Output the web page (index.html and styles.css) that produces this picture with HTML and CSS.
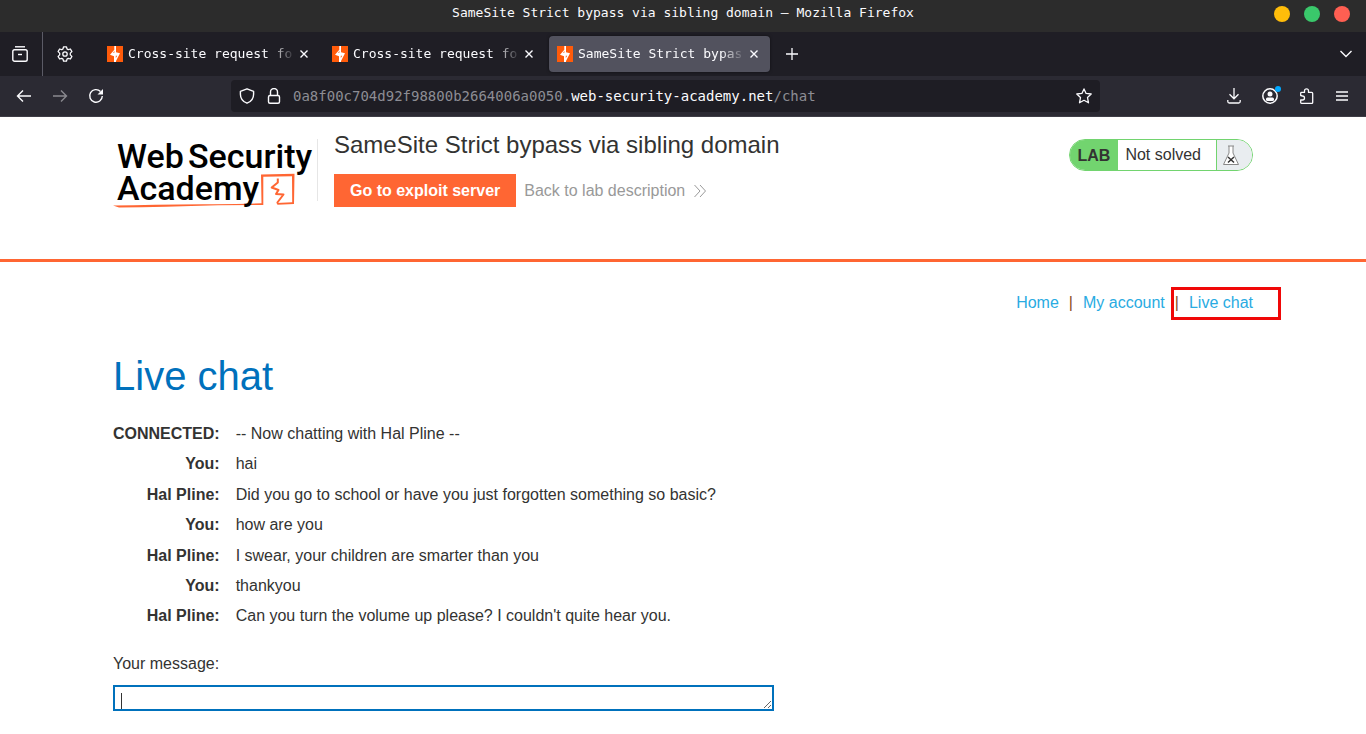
FILE: index.html
```html
<!DOCTYPE html>
<html lang="en">
<head>
<meta charset="utf-8">
<title>SameSite Strict bypass via sibling domain</title>
<link rel="stylesheet" href="styles.css">
</head>
<body>
<svg class="defs" aria-hidden="true">
  <symbol id="bolt" viewBox="0 0 16 16">
    <path fill="#ff5b0a" d="M0 0h16v16H0z"/>
    <path fill="#fff" d="M7.300 0H9v6.200l4 1L9 15v1H7v-5.800L3 8.800l4.300-5z"/>
    <path fill="#ff5b0a" d="M7.400 5v1.800H6zM8.800 9.800h1.400L8.800 12z"/>
  </symbol>
  <symbol id="close" viewBox="0 0 8 8"><path d="M.5.5l7 7M7.500.5l-7 7" fill="none" stroke="currentColor" stroke-width="1.400"/></symbol>
</svg>

<header class="browser">
  <div class="titlebar">
    <span class="window-title">SameSite Strict bypass via sibling domain — Mozilla Firefox</span>
    <div class="window-controls">
      <button class="dot dot-min" aria-label="Minimize"></button>
      <button class="dot dot-max" aria-label="Maximize"></button>
      <button class="dot dot-close" aria-label="Close window"></button>
    </div>
  </div>

  <div class="tabstrip">
    <button class="tool view-button" aria-label="Firefox View">
      <svg width="16" height="16" viewBox="0 0 16 16" fill="none" stroke="currentColor" stroke-width="1.400"><path d="M3 .8h10"/><rect x=".8" y="3.800" width="14.400" height="11.400" rx="1.800"/><path d="M6 8.500h4"/></svg>
    </button>
    <button class="tool gear-button" aria-label="Settings">
      <svg width="16" height="16" viewBox="0 0 16 16" fill="none" stroke="currentColor" stroke-width="1.300" stroke-linejoin="round"><path d="M6.500.8h3l.5 2.100 1.300.8 2.100-.7 1.500 2.600-1.600 1.500v1.800l1.600 1.500-1.500 2.600-2.100-.7-1.300.8-.5 2.100h-3L6 13.100l-1.300-.8-2.100.7-1.500-2.600 1.600-1.500V7.100L1.100 5.600 2.600 3l2.100.7L6 2.900z"/><circle cx="8" cy="8" r="2.200"/></svg>
    </button>
    <div class="tab">
      <svg class="favicon"><use href="#bolt"/></svg><span class="tab-label">Cross-site request fo</span>
      <button class="tab-close" aria-label="Close tab"><svg width="8" height="8"><use href="#close"/></svg></button>
    </div>
    <div class="tab">
      <svg class="favicon"><use href="#bolt"/></svg><span class="tab-label">Cross-site request fo</span>
      <button class="tab-close" aria-label="Close tab"><svg width="8" height="8"><use href="#close"/></svg></button>
    </div>
    <div class="tab tab-active">
      <svg class="favicon"><use href="#bolt"/></svg><span class="tab-label">SameSite Strict bypas</span>
      <button class="tab-close" aria-label="Close tab"><svg width="8" height="8"><use href="#close"/></svg></button>
    </div>
    <button class="tool new-tab" aria-label="New tab">
      <svg width="12" height="12" viewBox="0 0 12 12" stroke="currentColor" stroke-width="1.300"><path d="M6 0v12M0 6h12"/></svg>
    </button>
    <button class="tool all-tabs" aria-label="List all tabs">
      <svg width="12" height="8" viewBox="0 0 12 8" fill="none" stroke="currentColor" stroke-width="1.400"><path d="M.5 1L6 6.500 11.500 1"/></svg>
    </button>
  </div>

  <div class="toolbar">
    <nav class="history">
      <button class="tool" aria-label="Back"><svg width="16" height="14" viewBox="0 0 16 14" fill="none" stroke="currentColor" stroke-width="1.400"><path d="M15 7H1.500M7 1.500L1.500 7 7 12.500"/></svg></button>
      <button class="tool tool-disabled" aria-label="Forward"><svg width="16" height="14" viewBox="0 0 16 14" fill="none" stroke="currentColor" stroke-width="1.400"><path d="M1 7h13.500M9 1.500L14.500 7 9 12.500"/></svg></button>
      <button class="tool" aria-label="Reload"><svg width="16" height="16" viewBox="0 0 16 16" fill="none" stroke="currentColor" stroke-width="1.400"><path d="M12.500 3.500A6.300 6.300 0 1 0 14.300 8"/><path fill="currentColor" stroke="none" d="M15 1v5.500H9.500z"/></svg></button>
    </nav>
    <div class="urlbar">
      <svg width="16" height="16" viewBox="0 0 16 16" fill="none" stroke="currentColor" stroke-width="1.400" stroke-linejoin="round"><path d="M8 .8l6.600 2.600v2.800c0 3.800-2.800 7.500-6.600 9-3.800-1.500-6.600-5.200-6.600-9V3.400z"/></svg>
      <svg width="16" height="16" viewBox="0 0 16 16" fill="none" stroke="currentColor" stroke-width="1.400"><rect x="2.500" y="7.500" width="11" height="7.800" rx="1.500"/><path d="M4.500 7.500V4a3.500 3.500 0 0 1 7 0v3.500"/></svg>
      <span class="url">0a8f00c704d92f98800b2664006a0050.<span class="url-host">web-security-academy.net</span>/chat</span>
      <button class="tool" aria-label="Bookmark this page"><svg width="16" height="16" viewBox="0 0 16 16" fill="none" stroke="currentColor" stroke-width="1.300" stroke-linejoin="round"><path d="M8 .9l2.100 4.500 5.100.6-3.700 3.500 1 5.300L8 12.300l-4.500 2.500 1-5.300L.8 6l5.100-.6z"/></svg></button>
    </div>
    <div class="actions">
      <button class="tool" aria-label="Downloads"><svg width="14" height="16" viewBox="0 0 14 16" fill="none" stroke="currentColor" stroke-width="1.300"><path d="M7 0v10.500M2.500 6.300L7 10.800l4.500-4.500M.8 12v1.500q0 1.500 1.500 1.500h9.400q1.500 0 1.500-1.500V12"/></svg></button>
      <button class="tool account" aria-label="Account"><svg width="16" height="16" viewBox="0 0 16 16" fill="currentColor"><circle cx="8" cy="8" r="7.200" fill="none" stroke="currentColor" stroke-width="1.500"/><circle cx="8" cy="6" r="2.500"/><rect x="4" y="9.500" width="8" height="3.500" rx="1.500"/></svg><span class="account-badge"></span></button>
      <button class="tool" aria-label="Extensions"><svg width="16" height="16" viewBox="0 0 16 16" fill="none" stroke="currentColor" stroke-width="1.300" stroke-linejoin="round"><path d="M1.700 7.500V5.200q0-.8.800-.8h3V2.800a2 2 0 0 1 4 0v1.600h3.200q1 0 1 1v9q0 .9-.9.900H2.500q-.8 0-.8-.8v-2.500h1.800a2 2 0 0 0 0-4z"/></svg></button>
      <button class="tool" aria-label="Menu"><svg width="12" height="10" viewBox="0 0 12 10" stroke="currentColor" stroke-width="1.300"><path d="M0 1h12M0 5h12M0 9h12"/></svg></button>
    </div>
  </div>
</header>

<section class="lab-header">
  <div class="container lab-row">
    <a class="logo" href="#">
      <svg width="200" height="72" viewBox="0 0 200 72" role="img" aria-label="Web Security Academy">
        <g class="logo-text"><text x="4" y="29">Web</text><text x="75" y="29">Security</text></g>
        <path fill="#ff6633" d="M0 66.500Q40 65.800 90 65.200t58.500-1L148 35.500 181.500 34.800 181 65 164.500 65.800 163.500 64 179.200 63.200 179 37.200 150.300 37.800 150.300 66l-45 .3Q50 68 6 68.500z"/>
        <path fill="none" stroke="#ff6633" stroke-width="2" stroke-linejoin="round" d="M164.800 39.500v4L158.700 48.500l6.800 2.500-2.500 4 7.500.5-6.500 8.500"/>
        <g class="logo-text"><text x="4" y="61">Academy</text></g>
      </svg>
    </a>
    <div class="lab-info">
      <h2>SameSite Strict bypass via sibling domain</h2>
      <div class="lab-links">
        <a class="button" href="#">Go to exploit server</a>
        <a class="back-link" href="#">Back to lab description
          <svg width="12" height="12" viewBox="0 0 12 12" fill="none" stroke="currentColor"><path d="M.5 0l5.500 6-5.500 6M6 0l5.500 6L6 12"/></svg></a>
      </div>
    </div>
    <div class="status">
      <span class="status-tag">LAB</span>
      <span class="status-text">Not solved</span>
      <span class="status-icon"><svg width="18" height="21" viewBox="0 0 18 21"><path fill="#fff" stroke="#888" d="M6 1h6M7 1v7L1.500 19.500h15L11 8V1"/><path fill="none" stroke="#333" stroke-width="1.500" d="M6 12l6 5.500M12 12l-6 5.500"/></svg></span>
    </div>
  </div>
</section>

<main class="container">
  <nav class="site-nav">
    <a href="#">Home</a><span>|</span><a href="#">My account</a><span class="marked">|</span><a href="#">Live chat</a>
  </nav>
  <h1>Live chat</h1>
  <table class="chat">
    <tr><th scope="row">CONNECTED:</th><td>-- Now chatting with Hal Pline --</td></tr>
    <tr><th scope="row">You:</th><td>hai</td></tr>
    <tr><th scope="row">Hal Pline:</th><td>Did you go to school or have you just forgotten something so basic?</td></tr>
    <tr><th scope="row">You:</th><td>how are you</td></tr>
    <tr><th scope="row">Hal Pline:</th><td>I swear, your children are smarter than you</td></tr>
    <tr><th scope="row">You:</th><td>thankyou</td></tr>
    <tr><th scope="row">Hal Pline:</th><td>Can you turn the volume up please? I couldn't quite hear you.</td></tr>
  </table>
  <form class="message">
    <label for="message">Your message:</label>
    <textarea id="message" rows="1"></textarea>
  </form>
</main>
</body>
</html>
```
FILE: styles.css
```css
*, *::after { box-sizing: border-box; }
body {
  margin: 0;
  background: #fff;
  color: #333332;
  font: 16px/1.4 "Liberation Sans", Arial, sans-serif;
  overflow-x: hidden;
}
a { text-decoration: none; }
svg { display: block; flex: none; }
.defs { width: 0; height: 0; position: absolute; }

/* Browser frame */
.browser {
  color: #fbfbfe;
  font: 13px/16px "DejaVu Sans Mono", monospace;
}
.browser button {
  border: 0;
  padding: 0;
  background: none;
  color: inherit;
  font: inherit;
}
.tool { display: flex; align-items: center; justify-content: center; }
.titlebar {
  display: grid;
  grid-template-columns: 1fr auto 1fr;
  align-items: center;
  height: 32px;
  padding: 0 16px 6px;
  background: #2c2c2c;
}
.window-title { grid-column: 2; }
.window-controls { display: flex; justify-content: flex-end; gap: 14px; padding-top: 2px; }
.browser .dot { width: 16px; height: 16px; border-radius: 50%; }
.browser .dot-min { background: #ffbd0a; }
.browser .dot-max { background: #3ac86b; }
.browser .dot-close { background: #ff5f52; }

.tabstrip { display: flex; align-items: center; height: 44px; background: #1f1e25; }
.tabstrip .view-button { width: 43px; height: 44px; padding-right: 2px; border-right: 1px solid #5b5b66; }
.gear-button { width: 44px; }
.tab {
  display: flex;
  align-items: center;
  width: 221px;
  height: 36px;
  margin: 0 2px;
  padding: 0 12px 0 8px;
  gap: 5px;
  border-radius: 4px;
}
.gear-button + .tab { margin-left: 12px; }
.tab-active { background: #52525e; box-shadow: 0 0 3px #0008; }
.favicon { width: 16px; height: 16px; }
.tab-label {
  flex: 1;
  white-space: nowrap;
  mask-image: linear-gradient(to left, transparent, #000 24px);
}
.new-tab { width: 40px; }
.all-tabs { width: 40px; margin-left: auto; }

.toolbar {
  display: flex;
  align-items: center;
  height: 41px;
  background: #2b2a33;
  border-bottom: 1px solid #3e3d46;
}
.history { display: flex; gap: 20px; padding-left: 16px; width: 231px; }
.tool-disabled { opacity: .45; }
.urlbar {
  display: flex;
  align-items: center;
  gap: 11px;
  flex: 1;
  height: 32px;
  padding: 0 8px;
  border-radius: 4px;
  background: #1e1d24;
  font-size: 14px;
}
.url { flex: 1; color: #8d8d94; white-space: nowrap; }
.url-host { color: #fbfbfe; }
.actions { display: flex; justify-content: flex-end; align-items: center; gap: 21px; width: 266px; padding-right: 18px; }
.account { position: relative; }
.account-badge {
  position: absolute;
  top: -2px;
  right: -3px;
  width: 6px;
  height: 6px;
  border-radius: 50%;
  background: #00a8ff;
}

/* Lab banner */
.container { width: calc(100% - 32px); max-width: 1140px; margin: 0 auto; }
.lab-header { padding: 22px 0 48px; border-bottom: 3px solid #ff6633; }
.lab-row { display: flex; align-items: flex-start; }
.logo { border-right: 1px solid #e6e6e6; height: 62px; width: 205px; }
.logo svg { overflow: visible; }
.logo-text { font: 500 34px Roboto, sans-serif; fill: #000; }
.lab-info { flex: 1; min-height: 72px; padding-left: 16px; }
.lab-info h2 { margin: -8px 0 15px; font-size: 24px; line-height: 28px; font-weight: 400; }
.lab-links { display: flex; align-items: center; gap: 8px; }
.button { padding: 6px 16px 5px; background: #ff6633; color: #fff; font-weight: 700; line-height: 22px; }
.back-link { display: flex; align-items: center; gap: 9px; padding-top: 1px; color: #999; }
.status {
  display: flex;
  height: 32px;
  border: 1px solid #72d46f;
  border-radius: 16px;
  overflow: hidden;
  line-height: 30px;
}
.status-tag { padding: 1px 8px 0 8px; background: #72d46f; font-weight: 700; }
.status-text { padding: 0 15px 0 7px; }
.status-icon { display: flex; align-items: center; width: 36px; padding-left: 5px; background: #e9edf0; border-left: 1px solid #72d46f; }

/* Page */
.site-nav { display: flex; justify-content: flex-end; gap: 10px; padding-top: 30px; line-height: 22px; }
.site-nav a { color: #29abe2; }
.site-nav span { color: #8c4a20; }
.marked { position: relative; }
.marked::after {
  content: "";
  position: absolute;
  top: -5px;
  left: -4px;
  width: 110px;
  height: 33px;
  border: 3px solid #f00808;
}
h1 { margin: 38px 0 19px; color: #0071bc; font-size: 40px; font-weight: 400; line-height: 48px; }
.chat { border-collapse: collapse; }
.chat th { padding: 4px 16px 4px 0; text-align: right; }
.chat td { padding: 4px 0; }
.message { display: flex; flex-direction: column; padding-top: 21px; }
.message label { line-height: 22px; }
.message textarea {
  width: 58%;
  height: 26px;
  margin-top: 10px;
  padding: 6px;
  border: 2px solid #0071bc;
  outline: 0;
  background: linear-gradient(#333, #333) 6px 6px / 1px 16px no-repeat #fff;
  font: 16px/16px "Liberation Sans", Arial, sans-serif;
  resize: both;
  overflow: hidden;
}
```
